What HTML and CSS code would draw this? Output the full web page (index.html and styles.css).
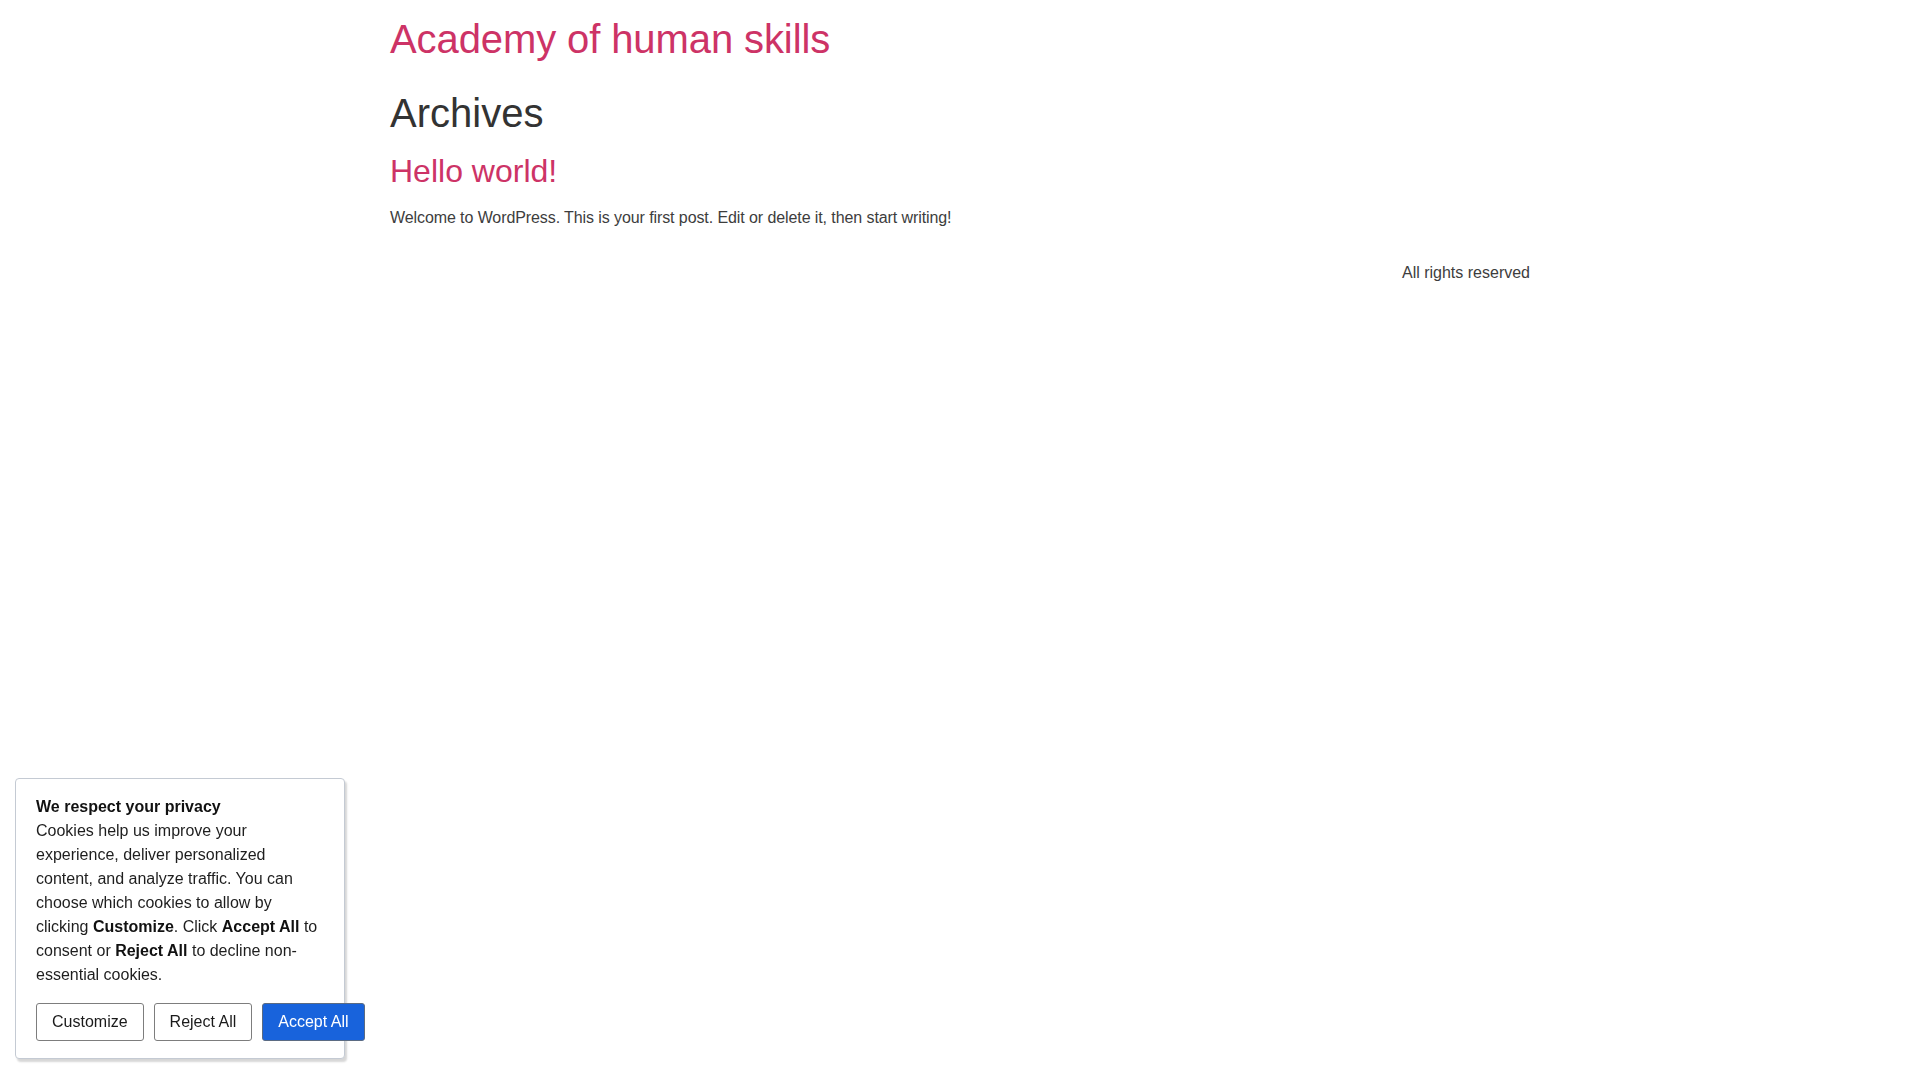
FILE: index.html
```html
<!DOCTYPE html>
<html lang="en">
<head>
<meta charset="utf-8">
<title>Archives - Academy of human skills</title>
<link rel="stylesheet" href="styles.css">
</head>
<body>
<div class="container">
  <header class="site-header">
    <a class="site-title" href="#">Academy of human skills</a>
  </header>
  <main class="site-main">
    <h1 class="page-title">Archives</h1>
    <article class="post">
      <h2 class="entry-title"><a href="#">Hello world!</a></h2>
      <p class="entry-summary">Welcome to WordPress. This is your first post. Edit or delete it, then start writing!</p>
    </article>
  </main>
  <footer class="site-footer">
    <p class="copyright">All rights reserved</p>
  </footer>
</div>

<div class="cky-box">
  <p class="cky-title">We respect your privacy</p>
  <p class="cky-text">Cookies help us improve your experience, deliver personalized content, and analyze traffic. You can choose which cookies to allow by clicking <b>Customize</b>. Click <b>Accept All</b> to consent or <b>Reject All</b> to decline non-essential cookies.</p>
  <div class="cky-buttons">
    <button class="cky-btn">Customize</button>
    <button class="cky-btn">Reject All</button>
    <button class="cky-btn cky-btn-accept">Accept All</button>
  </div>
</div>
</body>
</html>
```
FILE: styles.css
```css
html, body {
  margin: 0;
  padding: 0;
  background: #ffffff;
}

body {
  font-family: "Liberation Sans", Arial, sans-serif;
  font-size: 16px;
  line-height: 24px;
  color: #3a3a3a;
}

a {
  color: #cd3366;
  text-decoration: none;
}

.container {
  max-width: 1140px;
  margin: 0 auto;
}

.site-header {
  padding-top: 15px;
}

.site-title {
  display: block;
  font-size: 40px;
  line-height: 48px;
  letter-spacing: -0.1px;
  color: #cd3366;
}

.page-title {
  margin: 26px 0 0;
  font-size: 40px;
  line-height: 48px;
  font-weight: normal;
  color: #333333;
}

.entry-title {
  margin: 15px 0 0;
  font-size: 32px;
  line-height: 38px;
  font-weight: normal;
}

.entry-summary {
  margin: 16px 0 0;
  letter-spacing: -0.09px;
  color: #3d3d3d;
}

.site-footer {
  margin-top: 31px;
}

.copyright {
  margin: 0;
  text-align: right;
  color: #3d3d3d;
}

/* cookie consent box */
.cky-box {
  position: fixed;
  left: 15px;
  bottom: 21px;
  width: 330px;
  box-sizing: border-box;
  padding: 16px 20px 17px;
  background: #ffffff;
  border: 1px solid #c4cad3;
  border-radius: 4px;
  box-shadow: 2px 3px 2px rgba(0, 0, 0, 0.16);
  color: #1a1a1a;
}

.cky-title {
  margin: 0;
  font-weight: bold;
  color: #111111;
}

.cky-text {
  margin: 0;
  color: #1e1e1e;
}

.cky-text b {
  color: #111111;
}

.cky-buttons {
  display: flex;
  gap: 10px;
  margin-top: 16px;
}

.cky-btn {
  flex: none;
  height: 38px;
  padding: 0 15px;
  border: 1px solid #7d7d7d;
  border-radius: 3px;
  background: #ffffff;
  color: #1a1a1a;
  font-family: "Liberation Sans", Arial, sans-serif;
  font-size: 16px;
  line-height: 36px;
  cursor: pointer;
}

.cky-btn-accept {
  background: #1863dc;
  border-color: #5b6b82;
  color: #ffffff;
}
```
